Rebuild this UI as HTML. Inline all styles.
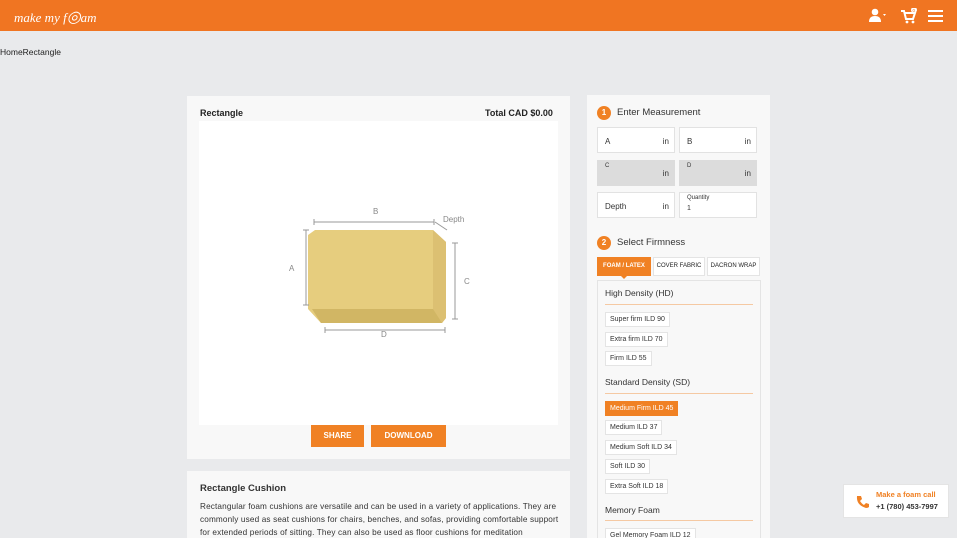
<!DOCTYPE html>
<html><head><meta charset="utf-8"><style>
*{box-sizing:border-box;margin:0;padding:0}
html,body{width:957px;height:538px;overflow:hidden}
body{background:#e9eaec;font-family:"Liberation Sans",sans-serif;color:#222;position:relative}
.abs{position:absolute}
.hdr{left:0;top:0;width:957px;height:31px;background:#f07522}
.card{background:#f8f8f8}
.inp{background:#fff;border:1px solid #e2e2e2;font-size:8px;color:#333}
.inp.g{background:#dcdcdc;border-color:#dcdcdc}
.opt{left:605px;height:15px;border:1px solid #e4e4e4;background:#fff;font-size:7px;line-height:13px;padding:0 4px;color:#333}
.sec{left:605px;font-size:8.5px;color:#333}
.line{left:605px;width:148px;height:1px;background:#f5c9a3}
.btn{background:#f08124;color:#fff;font-size:8px;font-weight:bold;text-align:center;line-height:22px;top:425px;height:22px}
.num{width:14px;height:14px;border-radius:50%;background:#f08124;color:#fff;font-size:8px;font-weight:bold;text-align:center;line-height:14px}
</style></head><body>
<div class="abs hdr"></div>
<div class="abs" style="left:14px;top:7px;color:#fff;font-size:13px;font-family:'Liberation Serif',serif;font-style:italic">make my f<span style="font-size:16px">◎</span>am</div>
<svg class="abs" style="left:868px;top:8px" width="80" height="16">
<circle cx="7" cy="4" r="3.3" fill="#fff"/><path d="M1 14 Q1 8 7 8 Q13 8 13 14Z" fill="#fff"/><path d="M15 6 l3 0 l-1.5 2z" fill="#fff"/>
<path d="M33 3 h3 l2 8 h7 l2 -6 h-10" fill="none" stroke="#fff" stroke-width="2"/><circle cx="39" cy="14" r="1.4" fill="#fff"/><circle cx="45" cy="14" r="1.4" fill="#fff"/>
<circle cx="46" cy="2" r="3" fill="#fff"/><text x="44.5" y="4" font-size="4.5" fill="#f07522">0</text>
<rect x="60" y="2" width="15" height="2" fill="#fff"/><rect x="60" y="7" width="15" height="2" fill="#fff"/><rect x="60" y="12" width="15" height="2" fill="#fff"/>
</svg>
<div class="abs" style="left:0;top:47px;font-size:8.5px;color:#222">HomeRectangle</div>

<div class="abs card" style="left:187px;top:96px;width:383px;height:363px"></div>
<div class="abs" style="left:200px;top:108px;font-size:9px;font-weight:bold">Rectangle</div>
<div class="abs" style="left:485px;top:108px;font-size:9px;font-weight:bold">Total CAD $0.00</div>
<div class="abs" style="left:199px;top:121px;width:359px;height:304px;background:#fff"></div>
<svg class="abs" style="left:270px;top:195px" width="220" height="150" font-family="Liberation Sans" font-size="8" fill="#888">
<path d="M45 35 h118 l13 12 v76 l-4 5 h-121 l-13 -14 v-74z" fill="#e6cd7e"/>
<path d="M163 35 l13 12 v76 l-4 5 l-9 -12z" fill="#dcc072"/>
<path d="M42 114 h121 l9 14 h-121z" fill="#d1b664"/>
<g stroke="#999" stroke-width="1" fill="none"><path d="M44 27 h120 M44 24 v6 M164 24 v6"/><path d="M165 27 l12 8"/><path d="M36 35 v75 M33 35 h6 M33 110 h6"/><path d="M185 48 v76 M182 48 h6 M182 124 h6"/><path d="M55 135 h120 M55 132 v6 M175 132 v6"/></g>
<text x="103" y="19">B</text><text x="173" y="27">Depth</text><text x="19" y="76">A</text><text x="194" y="89">C</text><text x="111" y="142">D</text>
</svg>
<div class="abs btn" style="left:311px;width:53px">SHARE</div>
<div class="abs btn" style="left:371px;width:75px">DOWNLOAD</div>

<div class="abs card" style="left:187px;top:471px;width:383px;height:80px"></div>
<div class="abs" style="left:200px;top:483px;font-size:9.5px;font-weight:bold;color:#333">Rectangle Cushion</div>
<div class="abs" style="left:200px;top:500px;width:362px;font-size:8.2px;letter-spacing:0.15px;line-height:13px;color:#333">Rectangular foam cushions are versatile and can be used in a variety of applications. They are commonly used as seat cushions for chairs, benches, and sofas, providing comfortable support for extended periods of sitting. They can also be used as floor cushions for meditation</div>

<div class="abs card" style="left:587px;top:95px;width:183px;height:450px"></div>
<div class="abs num" style="left:597px;top:106px">1</div>
<div class="abs" style="left:617px;top:107px;font-size:9.5px;color:#333">Enter Measurement</div>
<div class="abs inp" style="left:597px;top:127px;width:78px;height:26px"><span class="abs" style="left:7px;top:9px">A</span><span class="abs" style="right:5px;top:9px">in</span></div>
<div class="abs inp" style="left:679px;top:127px;width:78px;height:26px"><span class="abs" style="left:7px;top:9px">B</span><span class="abs" style="right:5px;top:9px">in</span></div>
<div class="abs inp g" style="left:597px;top:160px;width:78px;height:26px"><span class="abs" style="left:7px;top:2px;font-size:6px">C</span><span class="abs" style="right:5px;top:8px">in</span></div>
<div class="abs inp g" style="left:679px;top:160px;width:78px;height:26px"><span class="abs" style="left:7px;top:2px;font-size:6px">D</span><span class="abs" style="right:5px;top:8px">in</span></div>
<div class="abs inp" style="left:597px;top:192px;width:78px;height:26px"><span class="abs" style="left:7px;top:9px">Depth</span><span class="abs" style="right:5px;top:9px">in</span></div>
<div class="abs inp" style="left:679px;top:192px;width:78px;height:26px"><span class="abs" style="left:7px;top:2px;font-size:6px">Quantity</span><span class="abs" style="left:7px;top:12px;font-size:7px">1</span></div>
<div class="abs num" style="left:597px;top:236px">2</div>
<div class="abs" style="left:617px;top:237px;font-size:9.5px;color:#333">Select Firmness</div>
<div class="abs" style="left:597px;top:257px;width:54px;height:19px;background:#f08124;color:#fff;font-size:6px;font-weight:bold;text-align:center;line-height:19px">FOAM / LATEX</div>
<div class="abs" style="left:621px;top:276px;width:0;height:0;border:3px solid transparent;border-top-color:#f08124"></div>
<div class="abs" style="left:653px;top:257px;width:52px;height:19px;background:#fff;border:1px solid #e4e4e4;font-size:6px;text-align:center;line-height:17px">COVER FABRIC</div>
<div class="abs" style="left:707px;top:257px;width:53px;height:19px;background:#fff;border:1px solid #e4e4e4;font-size:6px;text-align:center;line-height:17px">DACRON WRAP</div>
<div class="abs" style="left:597px;top:280px;width:164px;height:270px;border:1px solid #e4e4e4;background:#f8f8f8"></div>
<div class="abs sec" style="top:288px">High Density (HD)</div><div class="abs line" style="top:304px"></div>
<div class="abs opt" style="top:312px">Super firm ILD 90</div>
<div class="abs opt" style="top:332px">Extra firm ILD 70</div>
<div class="abs opt" style="top:351px">Firm ILD 55</div>
<div class="abs sec" style="top:377px">Standard Density (SD)</div><div class="abs line" style="top:393px"></div>
<div class="abs opt" style="top:401px;background:#f08124;border-color:#f08124;color:#fff">Medium Firm ILD 45</div>
<div class="abs opt" style="top:420px">Medium ILD 37</div>
<div class="abs opt" style="top:440px">Medium Soft ILD 34</div>
<div class="abs opt" style="top:459px">Soft ILD 30</div>
<div class="abs opt" style="top:479px">Extra Soft ILD 18</div>
<div class="abs sec" style="top:505px">Memory Foam</div><div class="abs line" style="top:520px"></div>
<div class="abs opt" style="top:528px">Gel Memory Foam ILD 12</div>

<div class="abs" style="left:843px;top:484px;width:106px;height:34px;background:#fff;border:1px solid #e4e4e4"></div>
<svg class="abs" style="left:856px;top:495px" width="14" height="14"><path d="M2 1 l3 0 l1 3 l-2 2 q2 3 4 4 l2 -2 l3 1 v3 q-1 1 -3 1 q-10 -3 -9 -12z" fill="#f08124"/></svg>
<div class="abs" style="left:876px;top:490px;font-size:7.5px;font-weight:bold;color:#f08124">Make a foam call</div>
<div class="abs" style="left:876px;top:502px;font-size:7.5px;font-weight:bold;color:#333">+1 (780) 453-7997</div>
</body></html>
